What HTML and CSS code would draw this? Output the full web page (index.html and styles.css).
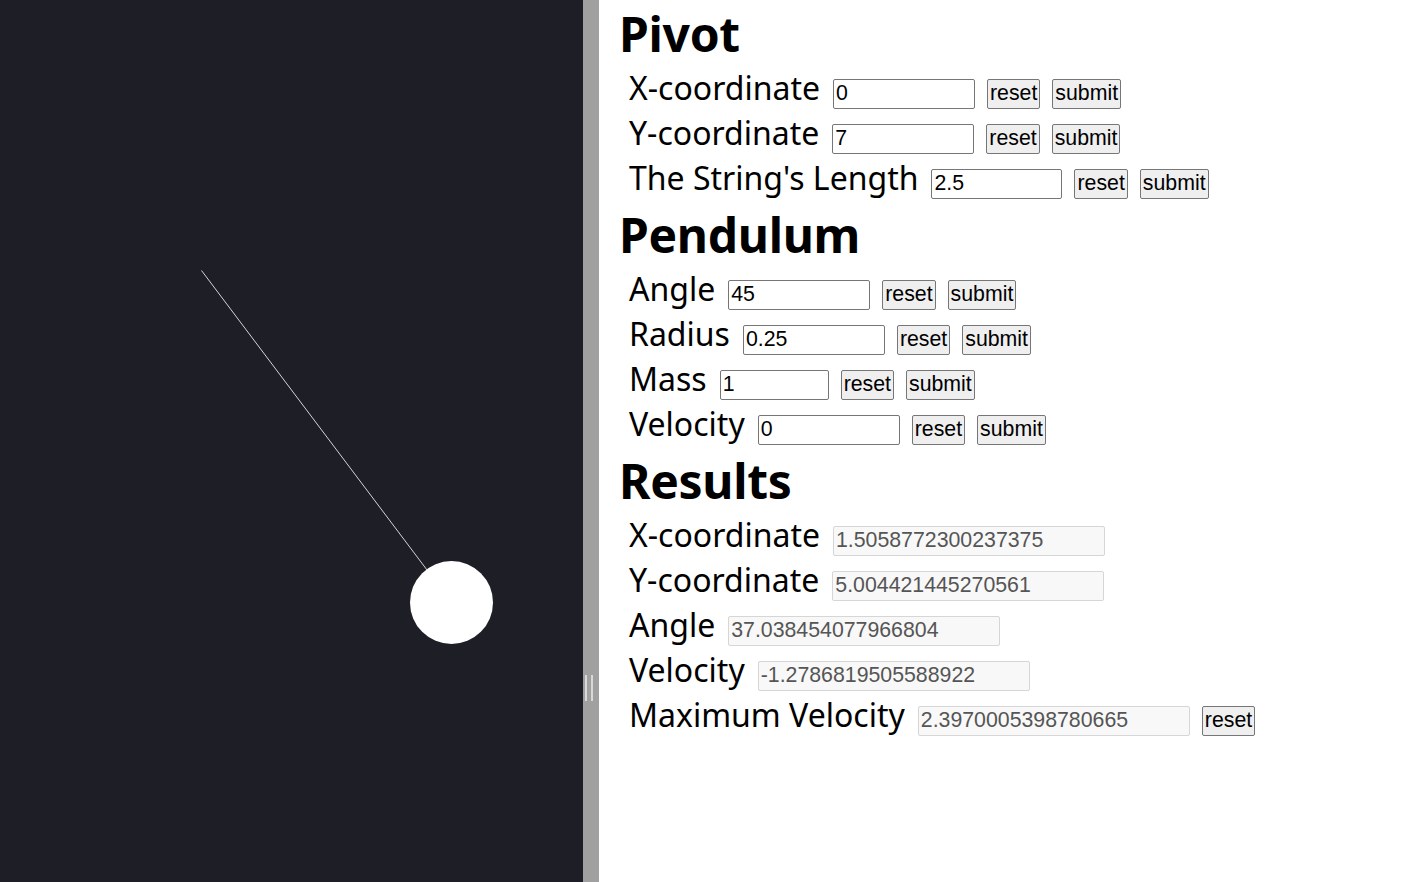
FILE: index.html
```html
<!DOCTYPE html>
<html lang="en">
<head>
<meta charset="utf-8">
<title>Pendulum</title>
<link rel="stylesheet" href="styles.css">
</head>
<body>
<div class="app">
  <div class="stage">
    <svg class="scene" width="583" height="882" viewBox="0 0 583 882">
      <line x1="201.5" y1="270.5" x2="451.5" y2="602.5" stroke="#d4d4d4" stroke-width="1"/>
      <circle cx="451.5" cy="602.5" r="41.5" fill="#ffffff"/>
    </svg>
  </div>
  <div class="gutter"><div class="grip"><span></span><span></span></div></div>
  <div class="panel">
    <h2 class="title first">Pivot</h2>
    <div class="row"><span class="label">X-coordinate</span><input class="field" type="text" value="0"><button class="btn">reset</button><button class="btn">submit</button></div>
    <div class="row"><span class="label">Y-coordinate</span><input class="field" type="text" value="7"><button class="btn">reset</button><button class="btn">submit</button></div>
    <div class="row"><span class="label">The String's Length</span><input class="field mid" type="text" value="2.5"><button class="btn">reset</button><button class="btn">submit</button></div>

    <h2 class="title">Pendulum</h2>
    <div class="row"><span class="label">Angle</span><input class="field" type="text" value="45"><button class="btn">reset</button><button class="btn">submit</button></div>
    <div class="row"><span class="label">Radius</span><input class="field" type="text" value="0.25"><button class="btn">reset</button><button class="btn">submit</button></div>
    <div class="row"><span class="label">Mass</span><input class="field short" type="text" value="1"><button class="btn">reset</button><button class="btn">submit</button></div>
    <div class="row"><span class="label">Velocity</span><input class="field" type="text" value="0"><button class="btn">reset</button><button class="btn">submit</button></div>

    <h2 class="title">Results</h2>
    <div class="row"><span class="label">X-coordinate</span><input class="field result" type="text" value="1.5058772300237375" readonly></div>
    <div class="row"><span class="label">Y-coordinate</span><input class="field result" type="text" value="5.004421445270561" readonly></div>
    <div class="row"><span class="label">Angle</span><input class="field result" type="text" value="37.038454077966804" readonly></div>
    <div class="row"><span class="label">Velocity</span><input class="field result" type="text" value="-1.2786819505588922" readonly></div>
    <div class="row"><span class="label">Maximum Velocity</span><input class="field result" type="text" value="2.3970005398780665" readonly><button class="btn">reset</button></div>
  </div>
</div>
</body>
</html>
```

FILE: styles.css
```css
html, body {
  margin: 0;
  padding: 0;
  height: 100%;
  overflow: hidden;
  background: #ffffff;
}

.app {
  display: flex;
  height: 882px;
  width: 1416px;
}

.stage {
  width: 583px;
  flex: none;
  background: #1e1e26;
}

.scene {
  display: block;
}

.gutter {
  width: 16px;
  flex: none;
  background: #a0a0a0;
  display: flex;
  flex-direction: column;
  align-items: flex-start;
  padding-top: 675px;
  box-sizing: border-box;
}

.grip {
  display: flex;
  gap: 4px;
  margin-left: 2px;
  height: 26px;
}

.grip span {
  width: 2px;
  height: 26px;
  background: #d9d9d9;
}

.panel {
  flex: 1;
  padding-left: 20px;
  font-family: "Noto Sans", "Open Sans", sans-serif;
  color: #000;
}

.title {
  font-size: 48px;
  font-weight: 700;
  line-height: 62px;
  margin: 4px 0 0 0;
  letter-spacing: -0.3px;
}

.title.first {
  margin-top: 3px;
}

.row {
  display: flex;
  align-items: baseline;
  height: 45px;
  padding-left: 10px;
  gap: 12px;
}

.label {
  font-size: 32px;
  line-height: 45px;
  margin-right: 1px;
  white-space: pre;
}

.field {
  box-sizing: border-box;
  width: 142px;
  height: 30px;
  margin: 0;
  padding: 1px 2px;
  border: 1px solid #767676;
  border-radius: 2px;
  font-family: "Liberation Sans", Arial, sans-serif;
  font-size: 21.3px;
  color: #000;
  background: #fff;
}

.field.mid {
  width: 131px;
}

.field.short {
  width: 109px;
}

.field.result {
  width: 272px;
  background: #f8f8f8;
  border-color: #d6d6d6;
  color: #555555;
}

.btn {
  box-sizing: border-box;
  height: 30px;
  margin: 0;
  padding: 0 2px;
  border: 1px solid #767676;
  border-radius: 2px;
  background: #efefef;
  font-family: "Liberation Sans", Arial, sans-serif;
  font-size: 21.3px;
  color: #000;
}
```
